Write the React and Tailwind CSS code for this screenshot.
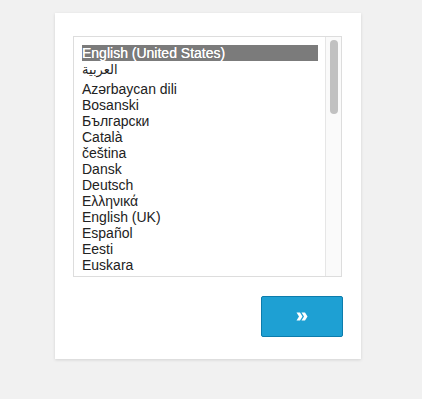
export default function App() {
  const langs = [
    "Azərbaycan dili",
    "Bosanski",
    "Български",
    "Català",
    "čeština",
    "Dansk",
    "Deutsch",
    "Ελληνικά",
    "English (UK)",
    "Español",
    "Eesti",
    "Euskara",
  ];
  return (
    <div className="w-[422px] h-[399px] bg-[#f1f1f1] pt-[13px] pl-[55px]" style={{ fontFamily: '"Liberation Sans", "DejaVu Sans", sans-serif' }}>
      <div className="w-[306px] h-[346px] bg-white shadow-[0_1px_3px_rgba(0,0,0,0.13)] pt-[23px] pl-[18px]">
        <div className="w-[269px] h-[241px] border border-[#dddddd] bg-white flex overflow-hidden">
          <div className="flex-1 pt-[8px] pl-[8px] pr-[7px] text-[14px] leading-[16px] text-[#222]">
            <div className="h-[16px] bg-[#7b7b7b] text-white whitespace-nowrap [text-shadow:0_0_0.4px_white]">English (United States)</div>
            <div className="h-[20px] leading-[18px] text-[13px]" style={{ fontFamily: '"DejaVu Sans", sans-serif' }}>العربية</div>
            {langs.map((l) => (
              <div key={l} className="h-[16px] whitespace-nowrap">{l}</div>
            ))}
          </div>
          <div className="w-[16px] bg-[#fafafa] border-l border-[#e6e6e6] pt-[3px] flex justify-center">
            <div className="w-[8px] h-[74px] rounded-full bg-[#c1c1c1]"></div>
          </div>
        </div>
        <div className="flex justify-end pr-[18px] mt-[19px]">
          <button className="w-[82px] h-[41px] bg-[#1ea0d3] border border-[#0c7cac] rounded-[2px] flex items-center justify-center">
            <svg width="12" height="9" viewBox="0 0 12 9">
              <path d="M0.5 0.5 L4 0.5 L6.5 4.5 L4 8.5 L0.5 8.5 L3 4.5 Z" fill="white" />
              <path d="M5.5 0.5 L9 0.5 L11.5 4.5 L9 8.5 L5.5 8.5 L8 4.5 Z" fill="white" />
            </svg>
          </button>
        </div>
      </div>
    </div>
  );
}
